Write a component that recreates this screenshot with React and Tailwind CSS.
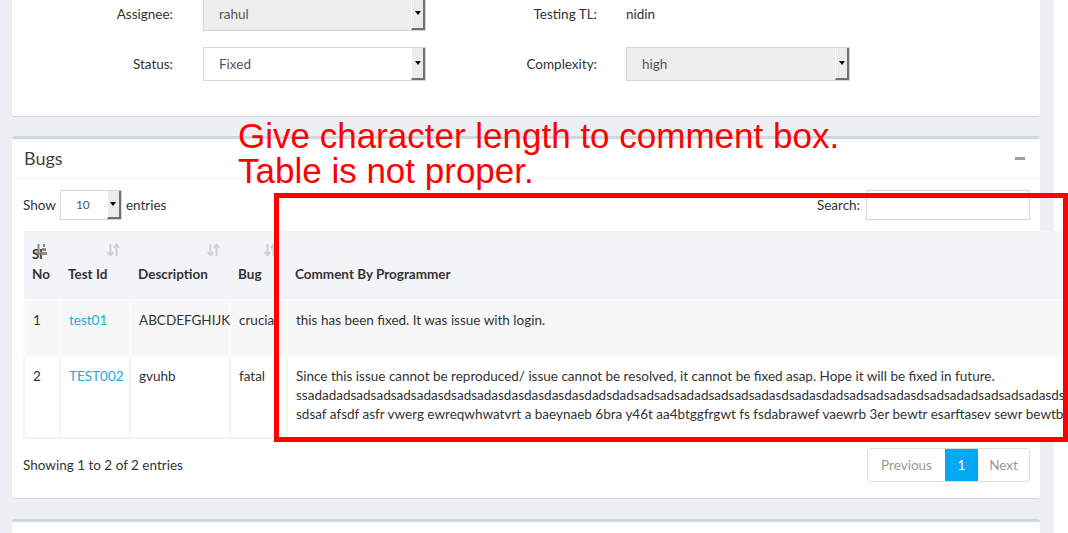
function Arrow() {
  return (
    <span className="self-stretch w-[14px] shrink-0 flex items-center justify-center bg-[#ececec] border-l border-l-white border-r-2 border-b-2 border-[#707070]">
      <span className="w-0 h-0 border-l-[3px] border-r-[3px] border-t-[4px] border-l-transparent border-r-transparent border-t-black" />
    </span>
  );
}

function Select({ value, disabled, className }) {
  return (
    <div className={`flex items-center justify-between border border-[#d2d6de] ${disabled ? 'bg-[#eeeeee]' : 'bg-white'} ${className}`}>
      <span className="pl-[15px] text-[#555]">{value}</span>
      <Arrow />
    </div>
  );
}

function SortIcon() {
  return (
    <svg width="13" height="14" viewBox="0 0 13 14" className="absolute top-[12px] right-[10px]">
      <g stroke="#cfcfcf" strokeWidth="2" fill="none">
        <path d="M3.5 1v11" />
        <path d="M0.8 9.2 3.5 12.3 6.2 9.2" />
        <path d="M9.5 2v11" />
        <path d="M6.8 4.8 9.5 1.7 12.2 4.8" />
      </g>
    </svg>
  );
}

function SortAscIcon() {
  return (
    <svg width="13" height="14" viewBox="0 0 13 14" className="absolute top-[12px] right-[12px]">
      <g fill="#8a8a8a">
        <rect x="2.5" y="1" width="2" height="10" />
        <path d="M0.5 9h6L3.5 13z" />
        <rect x="8" y="1" width="2" height="3" />
        <rect x="7" y="5" width="4" height="3" />
        <rect x="6" y="9" width="6" height="3" />
      </g>
    </svg>
  );
}

const th = 'relative align-bottom text-left font-bold px-[8px] pb-[15px] leading-[20px]';
const td = 'align-top px-[8px] pt-[10px] border-2 border-[#f4f4f4]';

export default function App() {
  return (
    <div className="relative w-[1068px] h-[533px] overflow-hidden flex bg-[#ecf0f5] font-[Lato,sans-serif] text-[13.5px] text-[#333]">
      <main className="w-[1054px] shrink-0 pl-3 pr-[14px]">
        {/* filter box */}
        <div className="-mt-[3px] bg-white rounded-b-[3px] shadow-[0_1px_1px_rgba(0,0,0,0.1)] pb-[35px]">
          <div className="flex items-center h-[34px]">
            <span className="w-[161px] text-right">Assignee:</span>
            <Select value="rahul" disabled className="ml-[30px] w-[223px] h-[34px]" />
            <span className="w-[171px] text-right">Testing TL:</span>
            <span className="ml-[29px]">nidin</span>
          </div>
          <div className="mt-[16px] flex items-center h-[34px]">
            <span className="w-[161px] text-right">Status:</span>
            <Select value="Fixed" className="ml-[30px] w-[223px] h-[34px]" />
            <span className="w-[171px] text-right">Complexity:</span>
            <Select value="high" disabled className="ml-[29px] w-[224px] h-[34px]" />
          </div>
        </div>

        {/* bugs box */}
        <div className="mt-5 bg-white border-t-[3px] border-[#d2d6de] rounded-[3px] shadow-[0_1px_1px_rgba(0,0,0,0.1)]">
          <div className="h-[40px] flex items-center justify-between pl-[12px] pr-[15px] border-b border-[#f4f4f4]">
            <h3 className="text-[18px] text-[#444]">Bugs</h3>
            <span className="w-[10px] h-[3px] bg-[#97a0b3]" />
          </div>
          <div className="pl-[11px] pr-[10px] pt-[11px] pb-[16px]">
            <div className="flex items-center justify-between h-[30px]">
              <div className="flex items-center">
                <span>Show</span>
                <Select value="10" className="ml-[4px] w-[62px] h-[30px] text-[12px]" />
                <span className="ml-[4px]">entries</span>
              </div>
              <div className="flex items-center">
                <span>Search:</span>
                <span className="ml-[6px] w-[164px] h-[30px] border border-[#d2d6de]" />
              </div>
            </div>

            <table className="relative z-10 mt-[11px] table-fixed border-collapse w-[1150px]">
              <colgroup>
                <col className="w-[36px]" />
                <col className="w-[70px]" />
                <col className="w-[100px]" />
                <col className="w-[57px]" />
                <col className="w-[887px]" />
              </colgroup>
              <thead>
                <tr className="bg-[#f3f4f8] h-[69px]">
                  <th className={th}><SortAscIcon />Sl<br />No</th>
                  <th className={th}><SortIcon />Test Id</th>
                  <th className={th}><SortIcon />Description</th>
                  <th className={th}><SortIcon />Bug</th>
                  <th className={th}>Comment By Programmer</th>
                </tr>
              </thead>
              <tbody className="leading-[19px]">
                <tr className="bg-[#f7f7f7] h-[56px]">
                  <td className={`${td} border-[#fbfbfb]`}>1</td>
                  <td className={`${td} border-[#fbfbfb] text-[#1ea7e6]`}>test01</td>
                  <td className={`${td} border-[#fbfbfb]`}>ABCDEFGHIJK</td>
                  <td className={`${td} border-[#fbfbfb] whitespace-nowrap overflow-hidden`}>crucial</td>
                  <td className={`${td} border-[#fbfbfb] whitespace-nowrap`}>this has been fixed. It was issue with login.</td>
                </tr>
                <tr className="bg-white h-[82px]">
                  <td className={td}>2</td>
                  <td className={`${td} text-[#1ea7e6]`}>TEST002</td>
                  <td className={td}>gvuhb</td>
                  <td className={td}>fatal</td>
                  <td className={`${td} whitespace-nowrap`}>
                    Since this issue cannot be reproduced/ issue cannot be resolved, it cannot be fixed asap. Hope it will be fixed in future.
                    <br />
                    ssadadadsadsadsadsadasdsadsadasdasdasdasdasdadsdadsadsadsadadsadsadsadasdsadasdadsadsadsadasdsadsadadsadsadsadasdsadsa
                    <br />
                    sdsaf afsdf asfr vwerg ewreqwhwatvrt a baeynaeb 6bra y46t aa4btggfrgwt fs fsdabrawef vaewrb 3er bewtr esarftasev sewr bewtbewtb
                  </td>
                </tr>
              </tbody>
            </table>

            <div className="mt-[9px] h-[34px] flex items-center justify-between">
              <span>Showing 1 to 2 of 2 entries</span>
              <div className="flex h-[34px] text-[#999] border border-[#ddd] rounded-[4px] overflow-hidden">
                <span className="w-[77px] flex items-center justify-center">Previous</span>
                <span className="w-[33px] flex items-center justify-center bg-[#03a9f4] text-white">1</span>
                <span className="w-[51px] flex items-center justify-center">Next</span>
              </div>
            </div>
          </div>
        </div>

        {/* next box */}
        <div className="mt-[21px] h-[40px] bg-white border-t-[3px] border-[#d2d6de] rounded-[3px]" />
      </main>
      <div className="flex-1 bg-white" />

      {/* annotation */}
      <div className="absolute left-[238px] top-[118px] z-20 font-['Liberation_Sans',Arial,sans-serif] text-[35px] leading-[35px] text-[#ff0000] whitespace-nowrap">
        Give character length to comment box.
        <br />
        Table is not proper.
      </div>
      <div className="absolute left-[274px] top-[193px] w-[794px] h-[249px] border-[5px] border-[#ff0000] z-20" />
    </div>
  );
}
